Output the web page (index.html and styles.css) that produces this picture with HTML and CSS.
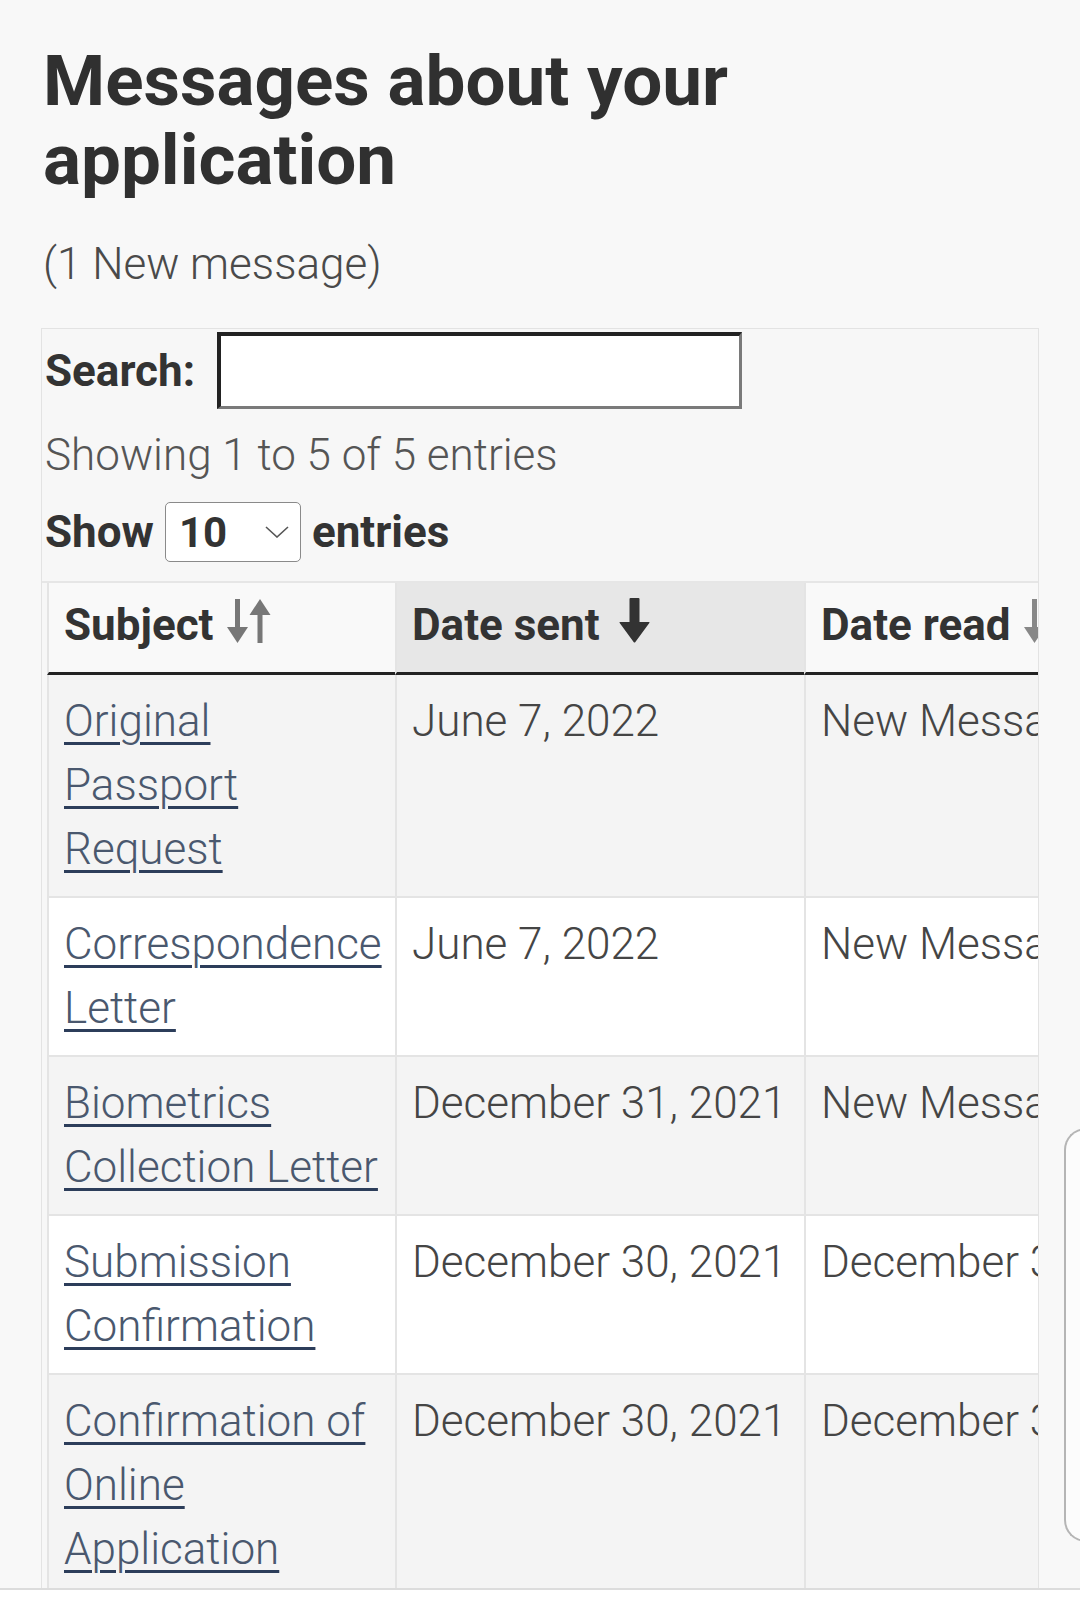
FILE: index.html
```html
<!DOCTYPE html>
<html lang="en">
<head>
<meta charset="utf-8">
<title>Messages about your application</title>
<link rel="stylesheet" href="styles.css">
</head>
<body>
<main class="page">
  <h1 class="title">Messages about your application</h1>
  <p class="subtitle">(1 New message)</p>

  <section class="dt">
    <div class="dt-search">
      <label class="bold-label" for="q">Search:</label>
      <input id="q" class="search-input" type="text">
    </div>
    <div class="dt-info">Showing 1 to 5 of 5 entries</div>
    <div class="dt-length">
      <span class="bold-label">Show</span>
      <div class="select">
        <span class="select-value">10</span>
        <svg class="chevron" width="24" height="12" viewBox="0 0 24 12"><path d="M1 1 L12 11 L23 1" fill="none" stroke="#555" stroke-width="1.6"/></svg>
      </div>
      <span class="bold-label">entries</span>
    </div>

    <div class="dt-scroll">
      <table class="msg-table">
        <colgroup>
          <col class="col-subject">
          <col class="col-sent">
          <col class="col-read">
        </colgroup>
        <thead>
          <tr>
            <th>Subject<svg class="sort-both" width="44" height="44" viewBox="0 0 44 44"><path d="M8 0 H13 V28 H21 L10.5 44 L0 28 H8 Z" fill="#777"/><path d="M30.5 44 H35.5 V16 H43.5 L33 0 L22.5 16 H30.5 Z" fill="#777"/></svg></th>
            <th class="sorted">Date sent<svg class="sort-desc" width="31" height="45" viewBox="0 0 31 45"><path d="M10.5 1 Q10.5 0 11.5 0 H19.5 Q20.5 0 20.5 1 V24 H30 Q31 24 30.3 25 L16.2 44.2 Q15.5 45 14.8 44.2 L0.7 25 Q0 24 1 24 H10.5 Z" fill="#333"/></svg></th>
            <th>Date read<svg class="sort-both" width="44" height="44" viewBox="0 0 44 44"><path d="M8 0 H13 V28 H21 L10.5 44 L0 28 H8 Z" fill="#888"/><path d="M30.5 44 H35.5 V16 H43.5 L33 0 L22.5 16 H30.5 Z" fill="#888"/></svg></th>
          </tr>
        </thead>
        <tbody>
          <tr>
            <td><a href="#">Original Passport Request</a></td>
            <td class="date">June 7, 2022</td>
            <td class="date">New Message</td>
          </tr>
          <tr>
            <td><a href="#">Correspondence Letter</a></td>
            <td class="date">June 7, 2022</td>
            <td class="date">New Message</td>
          </tr>
          <tr>
            <td><a href="#">Biometrics Collection Letter</a></td>
            <td class="date">December 31, 2021</td>
            <td class="date">New Message</td>
          </tr>
          <tr>
            <td><a href="#">Submission Confirmation</a></td>
            <td class="date">December 30, 2021</td>
            <td class="date">December 30, 2021</td>
          </tr>
          <tr>
            <td><a href="#">Confirmation of Online Application</a></td>
            <td class="date">December 30, 2021</td>
            <td class="date">December 30, 2021</td>
          </tr>
        </tbody>
      </table>
    </div>
  </section>
</main>
<div class="scroll-handle"></div>
<div class="bottom-bar"></div>
</body>
</html>
```

FILE: styles.css
```css
* { box-sizing: border-box; }

html, body { height: 100%; }

body {
  margin: 0;
  background: #f8f8f8;
  font-family: Roboto, "Noto Sans", "Liberation Sans", sans-serif;
  color: #444;
  overflow: hidden;
}

.page {
  padding: 0 41px;
}

.title {
  margin: 42px 0 0 2px;
  font-size: 71px;
  line-height: 78.5px;
  font-weight: 700;
  color: #303030;
}

.subtitle {
  margin: 39px 0 0 2px;
  font-size: 44px;
  line-height: 52px;
  font-weight: 300;
  color: #4a4a4a;
}

.dt {
  margin-top: 38px;
  border: 1px solid #e3e3e3;
  overflow: hidden;
  background: #f7f7f7;
}

.bold-label {
  font-size: 44px;
  font-weight: 700;
  color: #333;
}

.dt-search {
  display: flex;
  align-items: center;
  padding: 3px 0 0 3px;
}

.search-input {
  width: 525px;
  height: 77px;
  margin: 0 0 0 22px;
  padding: 0 10px;
  border-style: solid;
  border-width: 4px 3px 3px 4px;
  border-color: #222 #7a7a7a #7a7a7a #222;
  background: #fff;
  font: 300 40px Roboto, sans-serif;
  outline: none;
}

.dt-info {
  margin-top: 14px;
  padding-left: 3px;
  font-size: 44px;
  line-height: 64px;
  font-weight: 300;
  color: #555;
}

.dt-length {
  display: flex;
  align-items: center;
  gap: 11px;
  margin-top: 15px;
  padding-left: 3px;
}

.select {
  display: flex;
  align-items: center;
  justify-content: space-between;
  width: 136px;
  height: 60px;
  padding: 0 11px 0 13px;
  border: 1.5px solid #8a8a8a;
  border-radius: 5px;
  background: #fff;
}

.select-value {
  font-size: 42px;
  font-weight: 700;
  color: #333;
}

.chevron { display: block; }

.dt-scroll {
  margin-top: 19px;
  border-top: 2px solid #e6e6e6;
  padding-left: 5px;
}

.msg-table {
  border-collapse: separate;
  border-spacing: 0;
  table-layout: fixed;
  width: 1180px;
}

.col-subject { width: 348px; }
.col-sent { width: 409px; }
.col-read { width: 423px; }

.msg-table th,
.msg-table td {
  border-left: 2px solid #e4e4e4;
  text-align: left;
  vertical-align: top;
}

.msg-table th {
  padding: 10px 12px 15px 15px;
  font-size: 44px;
  line-height: 64px;
  font-weight: 700;
  color: #333;
  white-space: nowrap;
  background: #f9f9f9;
  border-bottom: 3px solid #222;
}

.msg-table th.sorted {
  background: #e7e7e7;
}

.sort-both {
  margin-left: 13px;
  vertical-align: -3px;
}

.sort-desc {
  margin-left: 19px;
  vertical-align: -3px;
}

.msg-table td {
  padding: 14px 10px 15px 15px;
  font-size: 44px;
  line-height: 64px;
  font-weight: 300;
  color: #454545;
  border-bottom: 2px solid #e4e4e4;
}

.msg-table td.date {
  white-space: nowrap;
}

.msg-table tbody tr:nth-child(odd) td { background: #f4f4f4; }
.msg-table tbody tr:nth-child(even) td { background: #ffffff; }

.msg-table a {
  color: #4a586e;
  text-decoration: underline;
  text-decoration-color: #2c3d5a;
  text-decoration-thickness: 3px;
  text-underline-offset: 6px;
}

.scroll-handle {
  position: fixed;
  left: 1064px;
  top: 1128px;
  width: 40px;
  height: 414px;
  border: 2px solid #b5b5b5;
  border-right: none;
  border-radius: 22px 0 0 22px;
  background: #fcfcfc;
}

.bottom-bar {
  position: fixed;
  left: 0;
  right: 0;
  bottom: 0;
  height: 17px;
  background: #fff;
  border-top: 2px solid #dcdcdc;
}
```
